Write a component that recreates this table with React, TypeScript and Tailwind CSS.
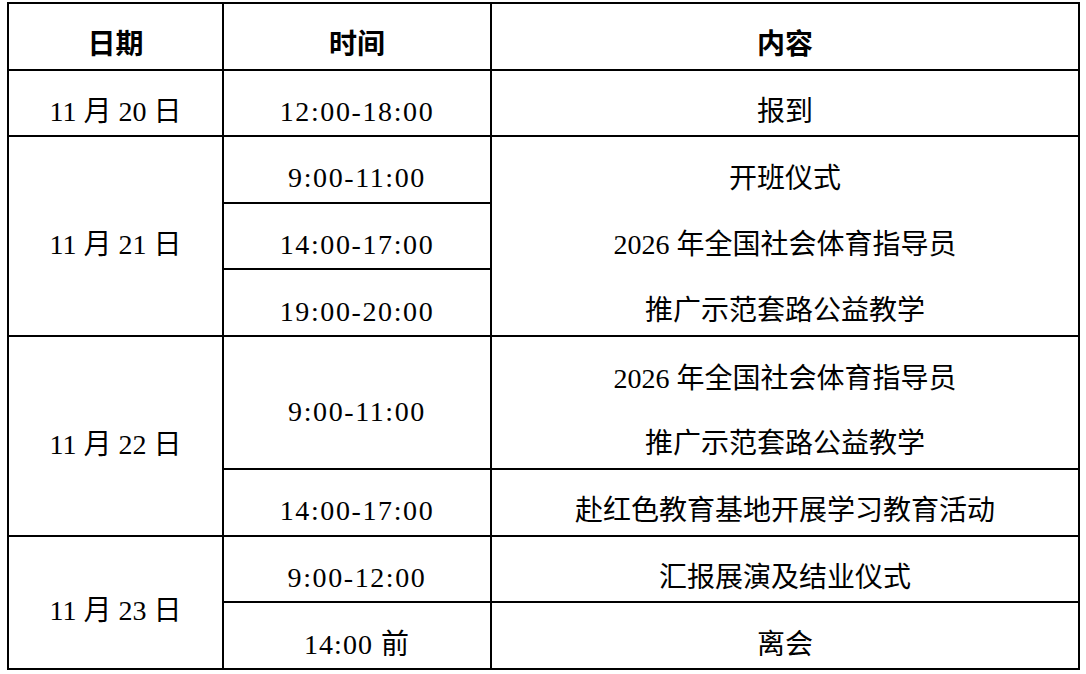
const font = { fontFamily: '"Liberation Serif", "Noto Sans CJK SC", serif' };

const Cell = ({ children, className = "", bold = false }: { children: React.ReactNode; className?: string; bold?: boolean }) => (
  <div className={`bg-white flex items-center justify-center pt-[18px] text-[28px] leading-none text-black whitespace-nowrap ${bold ? "font-bold" : ""} ${className}`}>
    {children}
  </div>
);

const Lines = ({ lines, className = "" }: { lines: string[]; className?: string }) => (
  <div className={`bg-white flex flex-col ${className}`}>
    {lines.map((l, i) => (
      <div key={i} className="flex-1 flex items-center justify-center pt-[18px] text-[28px] leading-none text-black whitespace-nowrap">
        {l}
      </div>
    ))}
  </div>
);

export default function App() {
  return (
    <div className="w-[1086px] h-[674px] bg-white pt-[2px] pl-[7px]" style={font}>
      <div className="w-[1073px] h-[668px] grid grid-cols-[213px_266px_1fr] grid-rows-[repeat(10,1fr)] gap-[2px] bg-black border-2 border-black">
        <Cell bold>日期</Cell>
        <Cell bold>时间</Cell>
        <Cell bold>内容</Cell>

        <Cell>11 月 20 日</Cell>
        <Cell className="tracking-[1.6px]">12:00-18:00</Cell>
        <Cell>报到</Cell>

        <Cell className="row-span-3">11 月 21 日</Cell>
        <Cell className="tracking-[1.6px]">9:00-11:00</Cell>
        <Lines className="row-span-3" lines={["开班仪式", "2026 年全国社会体育指导员", "推广示范套路公益教学"]} />
        <Cell className="tracking-[1.6px]">14:00-17:00</Cell>
        <Cell className="tracking-[1.6px]">19:00-20:00</Cell>

        <Cell className="row-span-3">11 月 22 日</Cell>
        <Cell className="row-span-2 tracking-[1.6px]">9:00-11:00</Cell>
        <Lines className="row-span-2" lines={["2026 年全国社会体育指导员", "推广示范套路公益教学"]} />
        <Cell className="tracking-[1.6px]">14:00-17:00</Cell>
        <Cell>赴红色教育基地开展学习教育活动</Cell>

        <Cell className="row-span-2">11 月 23 日</Cell>
        <Cell className="tracking-[1.6px]">9:00-12:00</Cell>
        <Cell>汇报展演及结业仪式</Cell>
        <Cell className="tracking-[1px]">14:00 前</Cell>
        <Cell>离会</Cell>
      </div>
    </div>
  );
}
